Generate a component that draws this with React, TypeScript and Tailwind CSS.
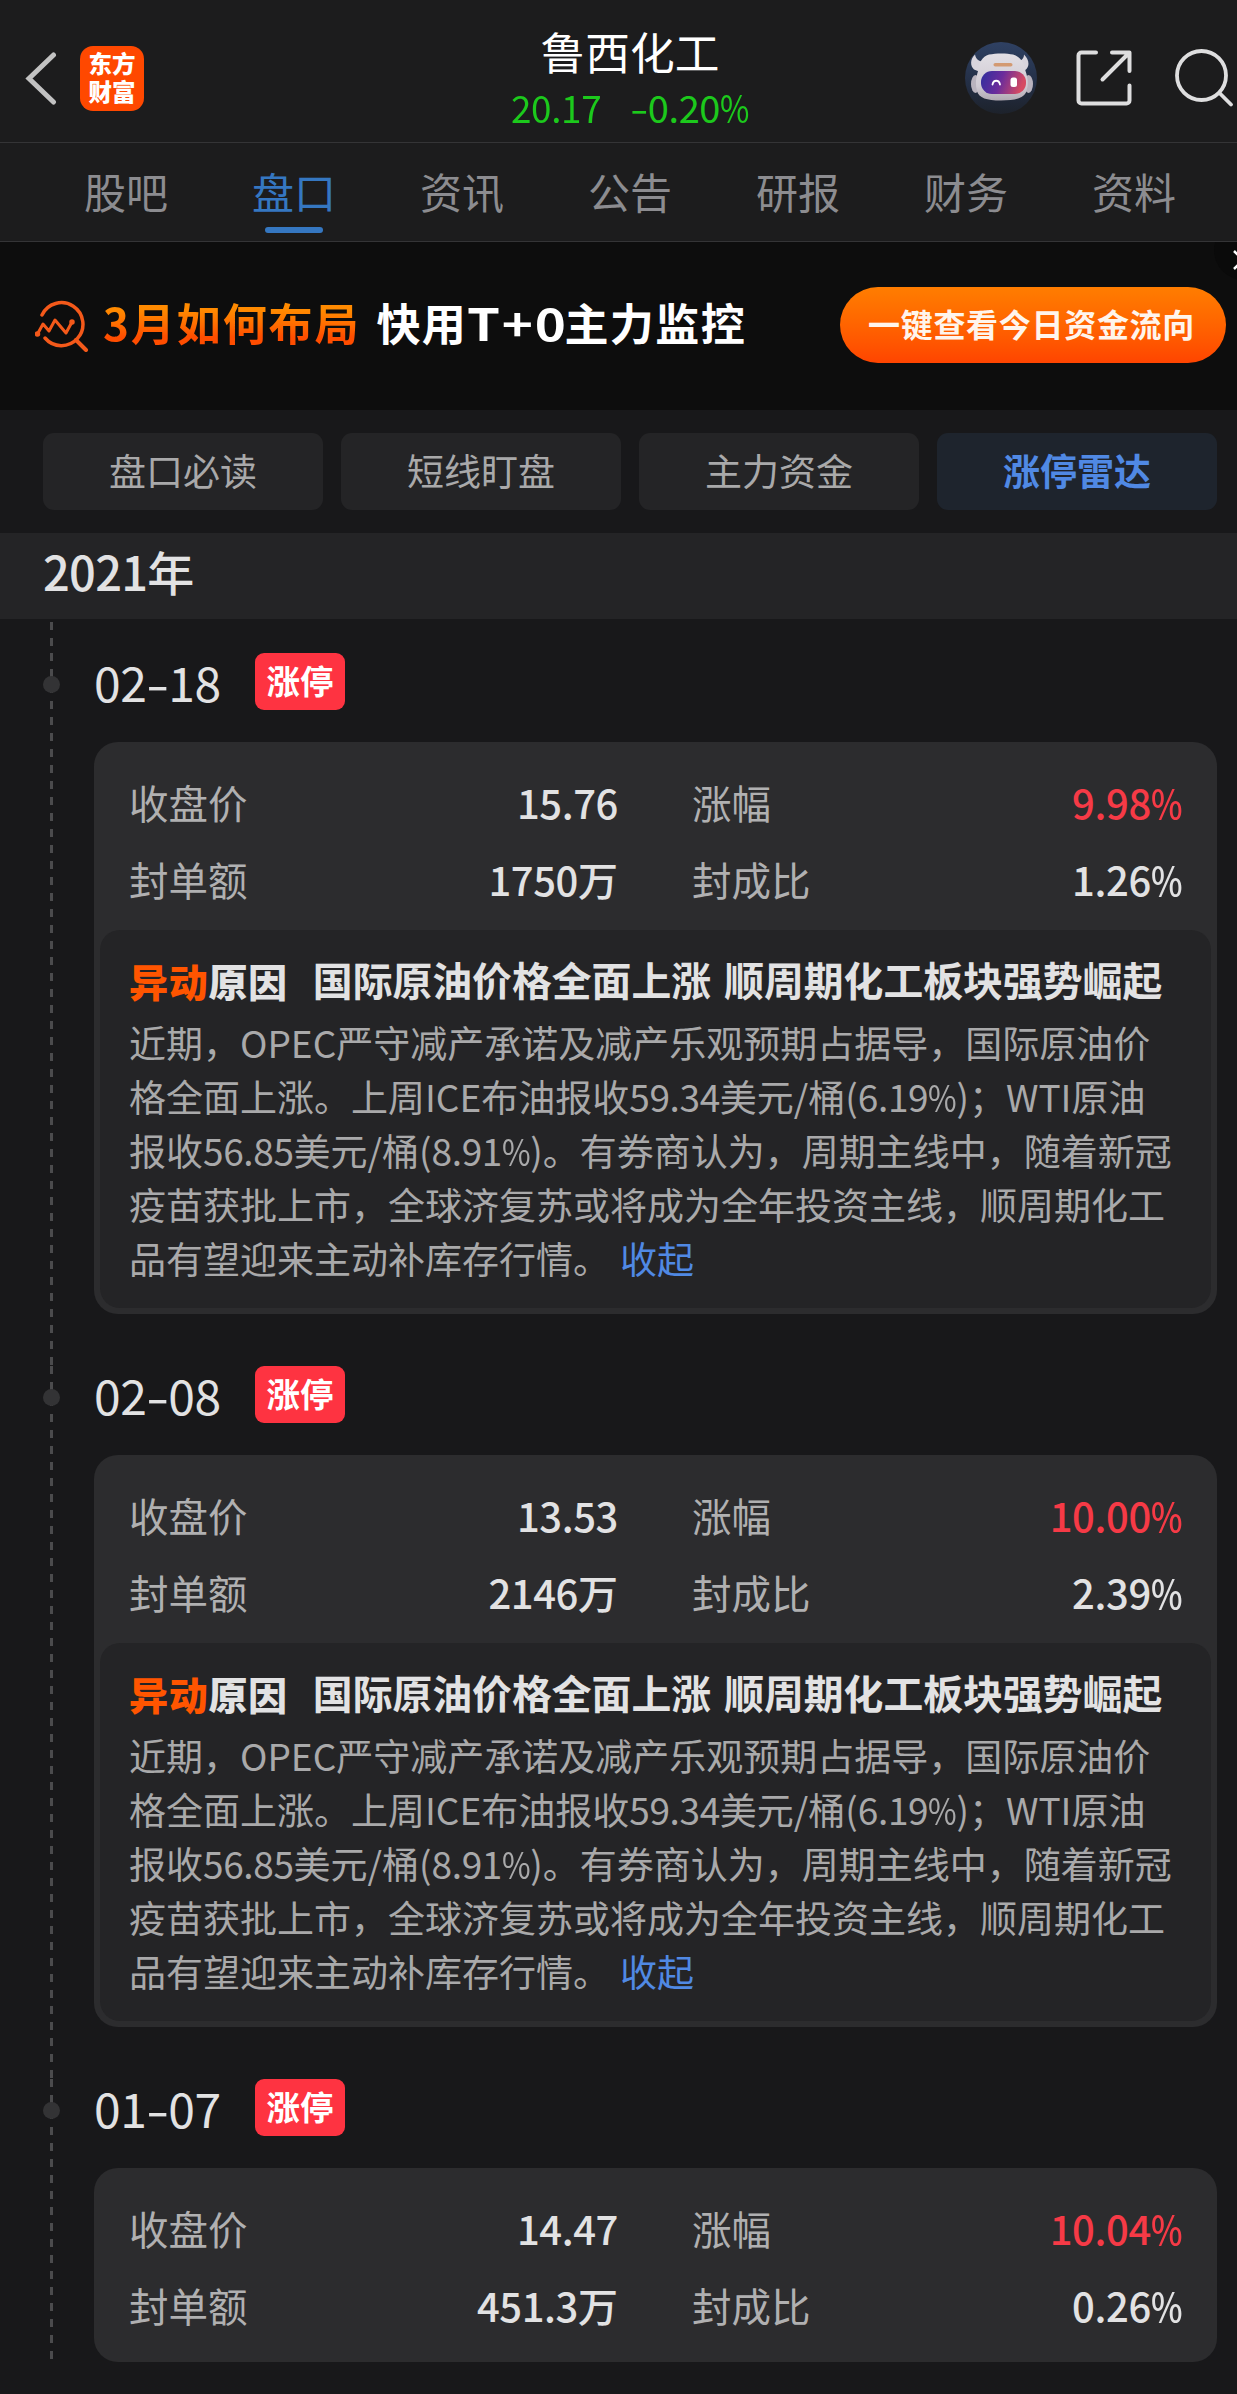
import React from "react";

const TABS = ["股吧", "盘口", "资讯", "公告", "研报", "财务", "资料"];
const PILLS = ["盘口必读", "短线盯盘", "主力资金", "涨停雷达"];

const REASON_TITLE = "国际原油价格全面上涨 顺周期化工板块强势崛起";
const REASON_LINES = [
  "近期，OPEC严守减产承诺及减产乐观预期占据导，国际原油价",
  "格全面上涨。上周ICE布油报收59.34美元/桶(6.19%)；WTI原油",
  "报收56.85美元/桶(8.91%)。有券商认为，周期主线中，随着新冠",
  "疫苗获批上市，全球济复苏或将成为全年投资主线，顺周期化工",
];
const REASON_TAIL = "品有望迎来主动补库存行情。";

type Entry = {
  date: string;
  close: string;
  sealed: string;
  change: string;
  ratio: string;
  reason: boolean;
};

const ENTRIES: Entry[] = [
  { date: "02-18", close: "15.76", sealed: "1750万", change: "9.98%", ratio: "1.26%", reason: true },
  { date: "02-08", close: "13.53", sealed: "2146万", change: "10.00%", ratio: "2.39%", reason: true },
  { date: "01-07", close: "14.47", sealed: "451.3万", change: "10.04%", ratio: "0.26%", reason: false },
];

const DASH =
  "w-[3px] bg-[repeating-linear-gradient(to_bottom,#4b4b4d_0px,#4b4b4d_8px,transparent_8px,transparent_16px)]";

/* Text with slightly tightened numbers, a condensed percent sign and a wide hyphen. */
function Num({ text }: { text: string }) {
  return (
    <>
      {text.split(/([0-9.]+|%|-)/).map((part, i) => {
        if (part === "%")
          return (
            <span key={i} className="-mr-[0.16em] inline-block origin-left scale-x-[0.84]">
              %
            </span>
          );
        if (part === "-")
          return (
            <span key={i} className="mr-[0.11em] inline-block origin-left scale-x-[1.4]">
              -
            </span>
          );
        if (/^[0-9.]+$/.test(part))
          return (
            <span key={i} className="tracking-[-0.01em]">
              {part}
            </span>
          );
        return part;
      })}
    </>
  );
}

function Robot() {
  return (
    <svg width="72" height="72" viewBox="0 0 72 72" className="shrink-0">
      <defs>
        <linearGradient id="sky" x1="0" y1="0" x2="0" y2="1">
          <stop offset="0" stopColor="#2f4163" />
          <stop offset="0.6" stopColor="#232e44" />
          <stop offset="1" stopColor="#1d222b" />
        </linearGradient>
        <linearGradient id="shell" x1="0" y1="0" x2="0" y2="1">
          <stop offset="0" stopColor="#e2dfe4" />
          <stop offset="0.7" stopColor="#cfcad3" />
          <stop offset="1" stopColor="#b0a9b2" />
        </linearGradient>
        <linearGradient id="visor" x1="0" y1="0" x2="1" y2="0.2">
          <stop offset="0" stopColor="#2f2f9e" />
          <stop offset="0.5" stopColor="#6a2c9c" />
          <stop offset="1" stopColor="#d64a62" />
        </linearGradient>
      </defs>
      <circle cx="36" cy="36" r="36" fill="url(#sky)" />
      <path d="M10 12.500C5 17 5 24 9 27.500l5 2 8-10c-6 1-11-1-12-7zM59 12.500c5 5 6 11 2 15l-4 2-7-10c5 0 9-2 9-7z" fill="#d9d5dd" />
      <ellipse cx="10.500" cy="42" rx="4.500" ry="9" fill="#b9b3be" />
      <ellipse cx="63.500" cy="42" rx="4.500" ry="9" fill="#b9b3be" />
      <path d="M24 12.500C31 11 42 11 48 12.500c8 2.500 11.500 9 12.500 16.500 2.500 7 3 14 1 20-2 7-11 9.500-25.500 9.500S14 56 12 49c-2-7-1-13 1-20 1-8 4-14.500 11-16.500z" fill="url(#shell)" />
      <rect x="28.500" y="21" width="19" height="3.600" rx="1.800" fill="#d39a72" />
      <rect x="16" y="29" width="45" height="23" rx="11" fill="url(#visor)" />
      <path d="M27.500 42.500c1-5 6.500-5 7.500 0" fill="none" stroke="#fff" strokeWidth="1.800" strokeLinecap="round" />
      <rect x="45.500" y="35.500" width="6.500" height="9.500" rx="2.500" fill="#fff" />
    </svg>
  );
}

function Header() {
  return (
    <header className="flex h-[143px] items-start border-b border-[#343436] bg-[#1c1c1d]">
      <svg width="32" height="56" viewBox="0 0 32 56" className="ml-[25px] mt-[50px] shrink-0">
        <path d="M28.500 5L4 28.500L28.500 52" fill="none" stroke="#c2c2c2" strokeWidth="5" strokeLinecap="round" strokeLinejoin="miter" />
      </svg>
      <div className="ml-[23px] mt-[46px] h-[65px] w-[64px] shrink-0 rounded-[13px] bg-[#ff4800] pt-[3px] text-center text-[23.500px] font-black leading-[28px] text-white">
        东方
        <br />
        财富
      </div>
      <div className="ml-[367px] flex w-[238px] shrink-0 flex-col items-center whitespace-nowrap">
        <div className="mt-[21px] text-[44.700px] leading-[60px] text-white">鲁西化工</div>
        <div className="mt-[2px] flex w-full justify-between text-[38px] leading-[48px] text-[#1cc91c]">
          <span className="inline-block origin-left scale-x-[0.97]">
            <Num text="20.17" />
          </span>
          <span>
            <Num text="-0.20%" />
          </span>
        </div>
      </div>
      <div className="ml-[216px] mt-[42px]">
        <Robot />
      </div>
      <svg width="56" height="58" viewBox="0 0 56 58" className="ml-[39px] mt-[49px] shrink-0" fill="none" stroke="#dededf" strokeWidth="4" strokeLinecap="round" strokeLinejoin="round">
        <path d="M20 3.500H5.500a3 3 0 0 0-3 3V51.500a3 3 0 0 0 3 3H50.500a3 3 0 0 0 3-3V36.500" />
        <path d="M36 3.500H53.500V22M53 4L26.500 30.500" />
      </svg>
      <svg width="60" height="60" viewBox="0 0 60 60" className="ml-[42px] mt-[47px] shrink-0" fill="none" stroke="#dededf" strokeWidth="3.800" strokeLinecap="round">
        <circle cx="27.500" cy="28.500" r="24.500" />
        <path d="M46 46.500L57 57.500" />
      </svg>
    </header>
  );
}

function TabBar() {
  return (
    <nav className="flex h-[99px] border-b border-[#343436] bg-[#1c1c1d] pl-[42px]">
      {TABS.map((t, i) => (
        <div key={t} className="flex w-[168px] shrink-0 flex-col items-center">
          <span className={"mt-[18px] h-[60px] text-[42px] leading-[60px] " + (i === 1 ? "text-[#3577c1]" : "text-[#8c8c90]")}>{t}</span>
          {i === 1 && <span className="mt-[6px] h-[6px] w-[58px] rounded-full bg-[#3577c1]" />}
        </div>
      ))}
    </nav>
  );
}

function Banner() {
  return (
    <section className="relative flex h-[168px] items-start overflow-hidden whitespace-nowrap bg-[#0d0d0d] font-bold">
      <svg width="54" height="52" viewBox="0 0 54 52" className="ml-[35px] mt-[58px] shrink-0" fill="none" stroke="#f4591a" strokeWidth="3.500" strokeLinecap="round" strokeLinejoin="round">
        <path d="M7 15A21.500 21.500 0 1 1 10 38" />
        <path d="M41 40L51 50" strokeWidth="4" />
        <path d="M2.500 34L8 24L14 31L20 20L31 33L37 22" strokeWidth="3" />
        <circle cx="2.500" cy="34" r="1" />
        <circle cx="37" cy="22" r="1" />
      </svg>
      <span className="ml-[14px] mt-[50px] bg-gradient-to-b from-[#ff8a00] from-30% to-[#ff4d00] to-75% bg-clip-text text-[44px] leading-[60px] tracking-[1.900px] text-transparent">
        3月如何布局
      </span>
      <span className="ml-[16px] mt-[50px] flex text-[44px] leading-[60px] tracking-[1.500px] text-white">
        <span>快用</span>
        <span className="w-[97px]">
          <span className="inline-block origin-left scale-x-[1.2]">T+0</span>
        </span>
        <span>主力监控</span>
      </span>
      <div className="absolute left-[840px] top-[45px] flex h-[76px] w-[386px] justify-center rounded-full bg-gradient-to-b from-[#ff7d00] to-[#ff4400] pt-[12px] text-[32px] leading-[48px] tracking-[0.700px] text-[#fff5ec]">
        <span className="-ml-[3px]">一键查看今日资金流向</span>
      </div>
      <div className="absolute left-[1214px] top-[-22px] h-[60px] w-[60px] rounded-full bg-[#0a0a0a]" />
      <svg width="20" height="20" viewBox="0 0 20 20" className="absolute left-[1233px] top-[8px]" stroke="#fff" strokeWidth="2.500">
        <path d="M1 1L19 19M19 1L1 19" />
      </svg>
    </section>
  );
}

function Stat({ label, value, red }: { label: string; value: string; red?: boolean }) {
  return (
    <div className="flex h-[77px] items-center justify-between">
      <span className="text-[39.500px] text-[#b0b0b1]">{label}</span>
      <span className={"text-[40px] font-medium " + (red ? "text-[#f63a46]" : "text-[#e2e2e3]")}>
        <Num text={value} />
      </span>
    </div>
  );
}

function Reason() {
  return (
    <div className="mx-[6px] mb-[6px] h-[378px] whitespace-nowrap rounded-[20px] bg-[#242426] pl-[29px] pt-[19px]">
      <div className="flex h-[60px] leading-[60px]">
        <span className="mt-px text-[39px] font-black tracking-[0.700px] text-[#e2e2e3]">
          <span className="text-[#ff5500]">异动</span>原因
        </span>
        <span className="ml-[25px] text-[39.850px] font-bold text-[#e2e2e3] [word-spacing:4px]">{REASON_TITLE}</span>
      </div>
      <div className="mt-[6px] text-[37px] leading-[54px] text-[#a9a9aa]">
        {REASON_LINES.map((l) => (
          <div key={l}>
            <Num text={l} />
          </div>
        ))}
        <div>
          {REASON_TAIL}
          <span className="ml-[10px] text-[#5089e4]">收起</span>
        </div>
      </div>
    </div>
  );
}

function TimelineEntry({ e }: { e: Entry }) {
  return (
    <div className={"flex " + (e.reason ? "h-[713px]" : "h-[315px]")}>
      <div className="relative ml-[50px] mr-[41px] w-[3px] shrink-0">
        <div className={DASH + " " + (e.reason ? "h-full" : "h-[280px]")} />
        <span className="absolute -left-[7px] top-[23px] h-[17px] w-[17px] rounded-full bg-[#333335]" />
      </div>
      <div className="mr-[20px] flex-1">
        <div className="flex h-[89px] items-start">
          <span className="-mt-[2px] w-[161px] text-[48px] leading-[60px] text-[#e2e2e3]">
            <Num text={e.date} />
          </span>
          <span className="flex h-[57px] w-[90px] justify-center rounded-[9px] bg-[#fe3341] text-[33.500px] font-bold leading-[53px] text-white">
            涨停
          </span>
        </div>
        <div className="overflow-hidden rounded-[24px] bg-[#2c2c2e]">
          <div className={"grid grid-cols-[489px_490px] content-start gap-x-[74px] pl-[35px] pt-[21px] " + (e.reason ? "h-[188px]" : "h-[194px]")}>
            <Stat label="收盘价" value={e.close} />
            <Stat label="涨幅" value={e.change} red />
            <Stat label="封单额" value={e.sealed} />
            <Stat label="封成比" value={e.ratio} />
          </div>
          {e.reason && <Reason />}
        </div>
      </div>
    </div>
  );
}

export default function App() {
  return (
    <div className="h-[2394px] w-[1237px] overflow-hidden bg-[#18181a] font-['Noto_Sans_CJK_SC',sans-serif]">
      <Header />
      <TabBar />
      <Banner />
      <div className="flex h-[123px] gap-[18px] pl-[43px] pt-[23px]">
        {PILLS.map((p, i) => (
          <div
            key={p}
            className={
              "flex h-[77px] w-[280px] shrink-0 justify-center rounded-[11px] text-[37px] leading-[75px] " +
              (i === 3 ? "bg-[#1e242d] font-bold text-[#5089e4]" : "bg-[#242426] text-[#a9a9aa]")
            }
          >
            {p}
          </div>
        ))}
      </div>
      <div className="h-[86px] bg-[#242426] pl-[43px] text-[47px] font-medium leading-[75px] tracking-[-0.700px] text-[#e2e2e3]">2021年</div>
      <div className="flex h-[34px] pl-[50px] pt-[3px]">
        <div className={DASH + " h-[31px]"} />
      </div>
      {ENTRIES.map((e) => (
        <TimelineEntry key={e.date} e={e} />
      ))}
    </div>
  );
}
